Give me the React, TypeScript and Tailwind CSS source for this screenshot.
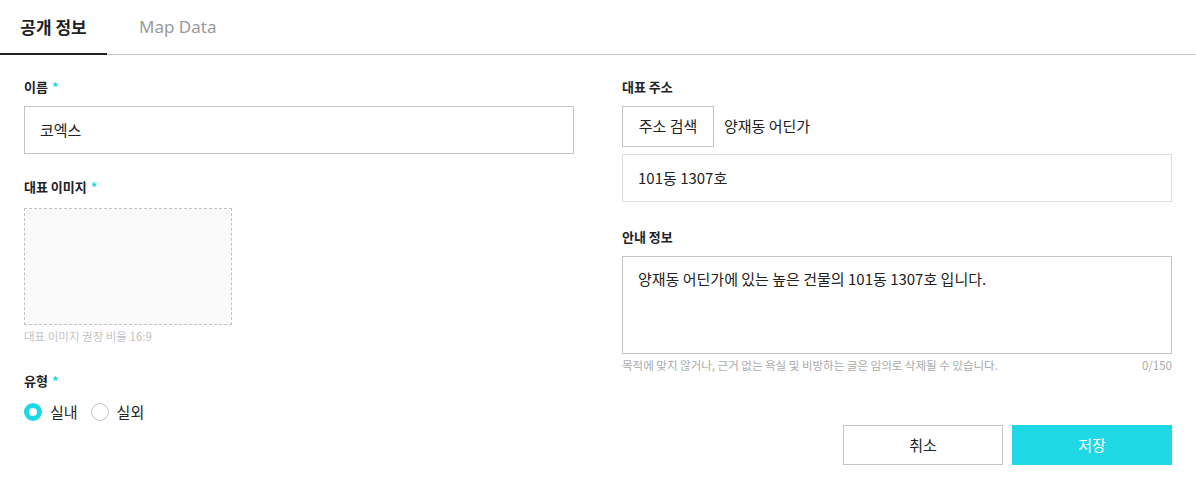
import React from "react";

const font = { fontFamily: '"Noto Sans CJK KR", "Noto Sans", sans-serif' };

function Label({ text, required }: { text: string; required?: boolean }) {
  return (
    <div className="h-5 flex items-center text-[13px] font-bold text-[#222]">
      <span>{text}</span>
      {required && <span className="ml-1 text-[#1fd8e6]">*</span>}
    </div>
  );
}

export default function App() {
  return (
    <div className="w-[1196px] h-[485px] bg-white text-[#222]" style={font}>
      <div className="flex h-[55px] border-b border-[#c8c8c8]">
        <div className="relative w-[107px] flex items-center justify-center text-[17px] font-bold text-[#222]">
          공개 정보
          <div className="absolute left-0 right-0 bottom-[-1px] h-[2px] bg-[#222]" />
        </div>
        <div className="flex items-center pl-[32px] text-[17px] text-[#9a9a9a]" style={{ fontFamily: '"Noto Sans", "Noto Sans CJK KR", sans-serif' }}>
          Map Data
        </div>
      </div>

      <div className="grid grid-cols-[550px_550px] gap-x-[48px] px-[24px] pt-[22px]">
        <div className="flex flex-col">
          <Label text="이름" required />
          <div className="mt-[9px] h-[48px] border border-[#c4c4c4] flex items-center px-[15px] text-[15px]">
            코엑스
          </div>
          <div className="mt-[23px]">
            <Label text="대표 이미지" required />
          </div>
          <div className="mt-[11px] w-[208px] h-[117px] border border-dashed border-[#c4c4c4] bg-[#fafafa]" />
          <div className="mt-[4px] h-4 flex items-center text-[11.5px] text-[#c4c4c4]">대표 이미지 권장 비율 16:9</div>
          <div className="mt-[26px]">
            <Label text="유형" required />
          </div>
          <div className="mt-[11px] flex items-center h-5 text-[15px]">
            <div className="w-[18px] h-[18px] rounded-full border-[5px] border-[#1fd8e6] bg-white" />
            <span className="ml-[8px]">실내</span>
            <div className="ml-[13px] w-[18px] h-[18px] rounded-full border border-[#c4c4c4] bg-white" />
            <span className="ml-[8px]">실외</span>
          </div>
        </div>

        <div className="flex flex-col">
          <Label text="대표 주소" />
          <div className="mt-[9px] flex items-center">
            <div className="w-[92px] h-[41px] border border-[#c4c4c4] flex items-center justify-center text-[15px]">
              주소 검색
            </div>
            <span className="ml-[10px] text-[15px]">양재동 어딘가</span>
          </div>
          <div className="mt-[7px] h-[48px] border border-[#dddddd] flex items-center px-[15px] text-[15px]">
            101동 1307호
          </div>
          <div className="mt-[25px]">
            <Label text="안내 정보" />
          </div>
          <div className="mt-[9px] h-[98px] border border-[#c4c4c4] px-[15px] pt-[11px] text-[15px] leading-[22px]">
            양재동 어딘가에 있는 높은 건물의 101동 1307호 입니다.
          </div>
          <div className="mt-[4px] h-4 flex items-center justify-between text-[11.5px] text-[#aaaaaa]">
            <span>목적에 맞지 않거나, 근거 없는 욕실 및 비방하는 글은 임의로 삭제될 수 있습니다.</span>
            <span>0/150</span>
          </div>
          <div className="mt-[51px] flex justify-end gap-[9px]">
            <button className="w-[160px] h-[40px] border border-[#c4c4c4] bg-white text-[15px] text-[#222]">취소</button>
            <button className="w-[160px] h-[40px] bg-[#1fd8e6] text-[15px] text-white">저장</button>
          </div>
        </div>
      </div>
    </div>
  );
}
